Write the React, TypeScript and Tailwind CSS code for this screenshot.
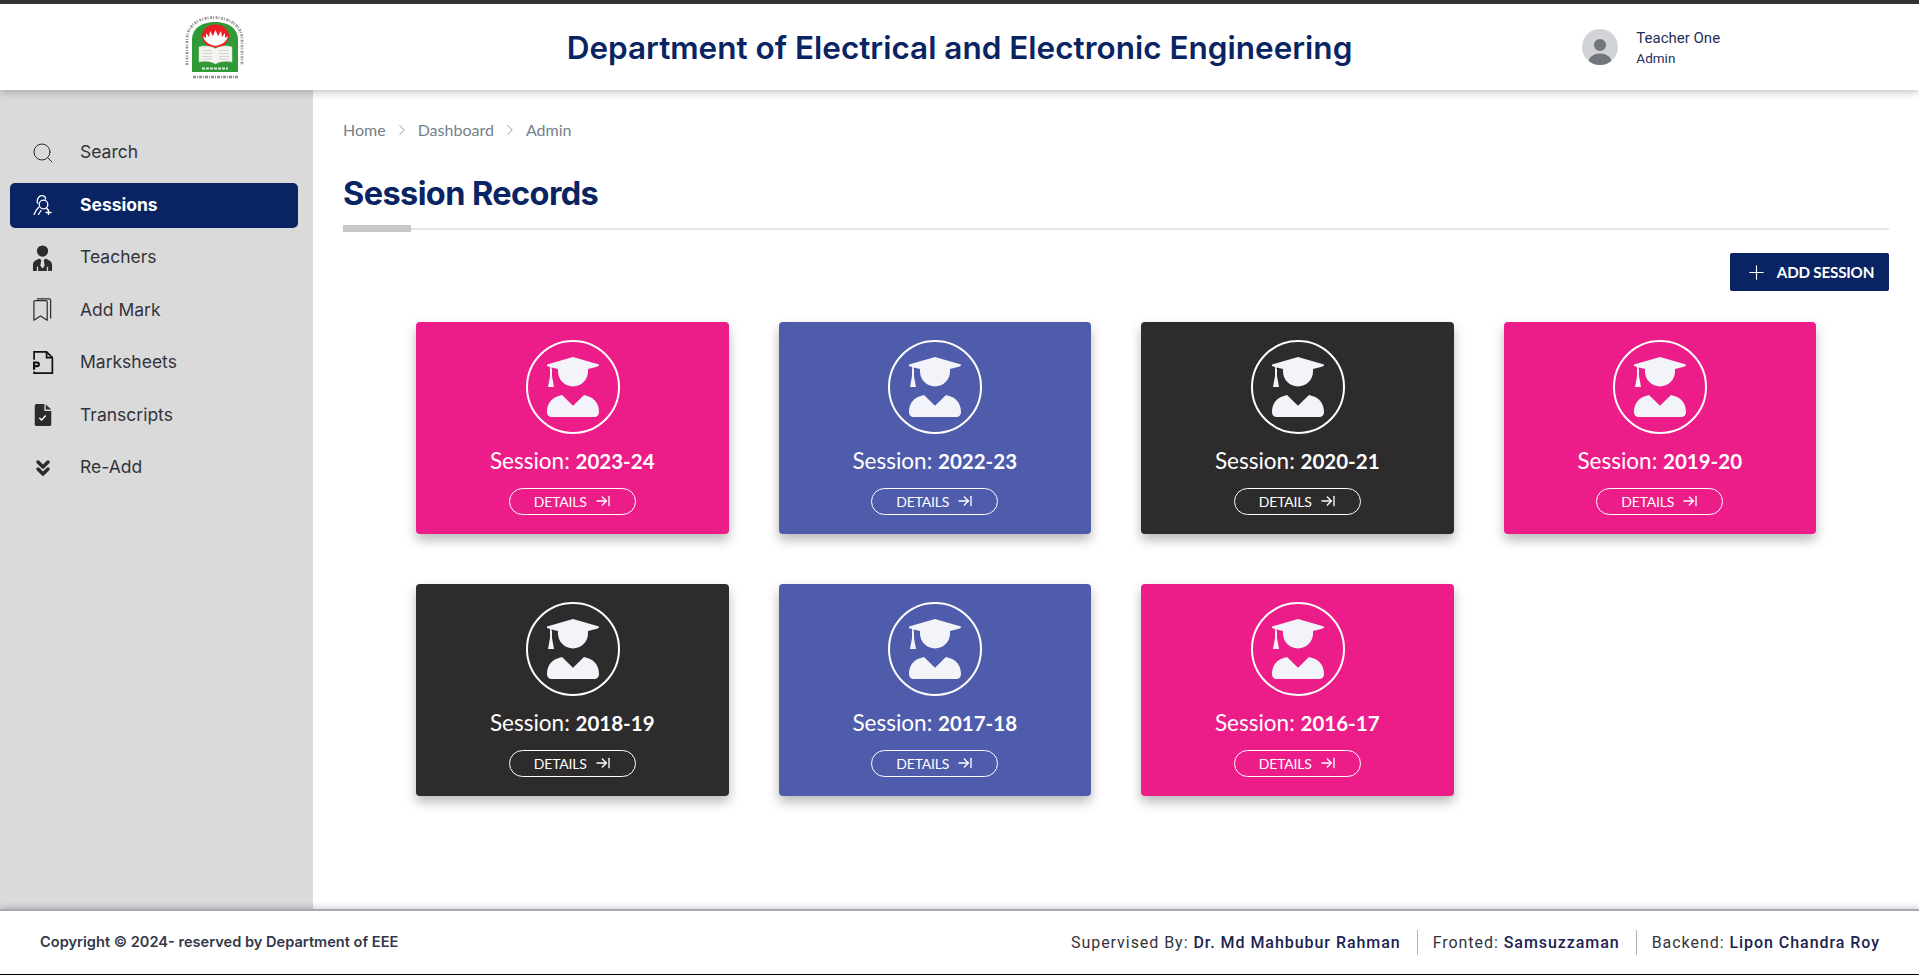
import { ArrowRightToLine, ChevronRight, ChevronsDown, Plus, Search } from "lucide-react";

const NAVY = "#0a2463";

const SESSIONS = [
  { year: "2023-24", bg: "bg-[#ec1c88]" },
  { year: "2022-23", bg: "bg-[#4f5bab]" },
  { year: "2020-21", bg: "bg-[#2d2b2c]" },
  { year: "2019-20", bg: "bg-[#ec1c88]" },
  { year: "2018-19", bg: "bg-[#2d2b2c]" },
  { year: "2017-18", bg: "bg-[#4f5bab]" },
  { year: "2016-17", bg: "bg-[#ec1c88]" },
];

function Logo() {
  return (
    <svg width="61" height="65" viewBox="0 0 61 65">
      {/* ring of tiny lettering, drawn as broken strokes */}
      <path d="M3 50V24C3 10 16 2.500 30 2.500S58 10 58 24V50" fill="none" stroke="#555" strokeWidth="2.800" strokeDasharray="2 1 1 1.500" opacity="0.6" />
      <path d="M8 57V25C8 13 18 7 31 7S54 13 54 25V57Z" fill="#2f9a36" />
      <ellipse cx="31.500" cy="21" rx="13.500" ry="11.500" fill="#ee1c25" />
      <path d="M19 21L22 23L22 18L25 22L26 16L29 21L31.500 15L34 21L37 16L38 22L41 18L41 23L44 21C43 27 37 30 31.500 31C26 30 20 27 19 21Z" fill="#fff" />
      <path d="M15 32C20 30 27 31 31.500 33.500C36 31 43 30 48 32V47C43 45.500 36 46 31.500 49C27 46 20 45.500 15 47Z" fill="#f4f4f0" stroke="#ddd" strokeWidth="0.500" />
      <path d="M18 35.500H28M18 38.500H28M18 41.500H28M18 44H28M35 35.500H45M35 38.500H45M35 41.500H45M35 44H45" stroke="#c4c4c4" strokeWidth="0.700" />
      <path d="M18 53.500H44" stroke="#d8efd8" strokeWidth="1.800" strokeDasharray="3 1" />
      <path d="M9 62H54" stroke="#444" strokeWidth="2.500" strokeDasharray="3 1 1 1" opacity="0.6" />
    </svg>
  );
}

function GraduateIcon() {
  return (
    <svg width="94" height="94" viewBox="0 0 94 94" className="ml-[1px] shrink-0">
      <circle cx="47" cy="47" r="46" fill="none" stroke="#fff" strokeWidth="2" />
      <path d="M21 24.500L47 17L73 24.500C73 26 72 26.500 70 27L62 29V31.500A15 15 0 0 1 32 31.500V29L25.500 27.500V29H24V27L21 26Z" fill="#f2f4f9" />
      <path d="M24 29H26V36L28 47H22L24 36Z" fill="#f2f4f9" />
      <path d="M21 72C21 62 27 57 36 55L47 65.700L58 55C67 57 73 62 73 72C73 75 71 77 68 77H26C23 77 21 75 21 72Z" fill="#f2f4f9" />
    </svg>
  );
}

function SessionsIcon() {
  return (
    <svg width="19" height="20" viewBox="0 0 19 20" fill="none" stroke="currentColor" strokeWidth="1.300" strokeLinecap="round">
      <circle cx="10.500" cy="9.500" r="4.300" />
      <path d="M13.500 13L15 15M4.500 8C3.500 4 6 0.700 9 0.700C11 0.700 12.500 2 12.500 4M5.500 12.500C3.500 14.500 2 17 1 19.500M8 15.500C7 17 6 18.500 5.500 19.500" />
      <path d="M15.500 15V20M13 17.500H18" />
    </svg>
  );
}

function TeacherIcon() {
  return (
    <svg width="21" height="26" viewBox="0 0 24 30" fill="#2d2b2c">
      <circle cx="12" cy="7" r="6.500" />
      <path d="M1 30V23C1 19 5 17 9 16L10.500 17.500L9.500 24L12 27L14.500 24L13.500 17.500L15 16C19 17 23 19 23 23V30H18.500V25H17V30H7V25H5.500V30Z" />
    </svg>
  );
}

function BookmarkIcon() {
  return (
    <svg width="19" height="24" viewBox="0 0 22 28" fill="none" stroke="#2d2b2c" strokeWidth="1.400" strokeLinejoin="round">
      <path d="M1 4.500C1 3.500 1.800 3 2.500 3H15C16 3 16.500 3.500 16.500 4.500V26L8.700 21L1 26Z" />
      <path d="M4.500 1H19C20 1 20.500 1.500 20.500 2.500V24" />
    </svg>
  );
}

function MarksheetIcon() {
  return (
    <svg width="22" height="25" viewBox="0 0 24 28" fill="none" stroke="#111" strokeWidth="1.900">
      <path d="M2 11V2H16L22.500 8.500V26H2V24" />
      <path d="M16 2V8.500H22.500" />
      <path d="M2 22V14H5.500C8 14 8 18 5.500 18H2" strokeWidth="2.400" />
    </svg>
  );
}

function TranscriptIcon() {
  return (
    <svg width="18" height="22" viewBox="0 0 18 24">
      <path d="M2 0H10.500V7.500H18V22C18 23 17 24 16 24H2C1 24 0 23 0 22V2C0 1 1 0 2 0Z" fill="#2d2b2c" />
      <path d="M12 0.500L18 6H12Z" fill="#2d2b2c" />
      <path d="M5 15L7.500 17.500L12 12.500" fill="none" stroke="#fff" strokeWidth="1.500" />
    </svg>
  );
}

const NAV = [
  { label: "Search", icon: <Search size={24} strokeWidth={1} color="#2d2b2c" /> },
  { label: "Sessions", icon: <SessionsIcon />, active: true },
  { label: "Teachers", icon: <TeacherIcon /> },
  { label: "Add Mark", icon: <BookmarkIcon /> },
  { label: "Marksheets", icon: <MarksheetIcon /> },
  { label: "Transcripts", icon: <TranscriptIcon /> },
  { label: "Re-Add", icon: <ChevronsDown size={24} strokeWidth={3.500} color="#2d2b2c" /> },
];

function Sidebar() {
  return (
    <aside className="w-[313px] shrink-0 bg-[#dadada] pt-[40px] pl-[10px] pr-[15px] font-['Inter',sans-serif]">
      <nav className="flex flex-col gap-[7.500px]">
        {NAV.map(({ label, icon, active }) => (
          <div
            key={label}
            className={
              active
                ? "flex h-[45px] items-center rounded-[5px] bg-[#0a2463] text-white font-bold"
                : "flex h-[45px] items-center rounded-[5px] text-[#33333b] font-normal"
            }
          >
            <div className="flex w-[70px] shrink-0 justify-center pr-[5px]">{icon}</div>
            <span className="text-[17.500px]">{label}</span>
          </div>
        ))}
      </nav>
    </aside>
  );
}

function Breadcrumb() {
  return (
    <div className="flex items-center text-[16px] text-[#75808a]">
      <span>Home</span>
      <ChevronRight size={18} strokeWidth={1} className="mx-[7px] text-[#777]" />
      <span>Dashboard</span>
      <ChevronRight size={18} strokeWidth={1} className="mx-[7px] text-[#777]" />
      <span>Admin</span>
    </div>
  );
}

function SessionCard({ year, bg }: { year: string; bg: string }) {
  return (
    <div className={`flex h-[212px] flex-col items-center rounded-[4px] pt-[18px] text-white shadow-[0_6px_12px_rgba(0,0,0,0.28)] ${bg}`}>
      <GraduateIcon />
      <div className="mt-[13px] text-[22.500px] leading-[28px]">
        Session: <span className="font-bold text-[20.500px]">{year}</span>
      </div>
      <button className="mt-[13px] flex h-[27px] w-[127px] items-center justify-center gap-[8px] rounded-full border border-white pb-[1px] text-[14px] tracking-[-0.2px]">
        DETAILS
        <ArrowRightToLine size={16} strokeWidth={2} />
      </button>
    </div>
  );
}

export default function App() {
  return (
    <div className="flex h-[975px] flex-col bg-white font-['Lato',sans-serif]">
      {/* top bar */}
      <header className="relative z-10 grid h-[90px] shrink-0 grid-cols-[1fr_auto_1fr] items-center border-t-[4px] border-[#333333] bg-white shadow-[0_2px_8px_rgba(0,0,0,0.25)]">
        <div className="pl-[184px]">
          <Logo />
        </div>
        <h1 className="mt-[1px] font-['Inter',sans-serif] text-[31.500px] font-semibold text-[#0a2463]">
          Department of Electrical and Electronic Engineering
        </h1>
        <div className="flex items-center justify-start gap-[18px] pl-[230px] font-['Roboto',sans-serif] text-[#0a2463]">
          <div className="flex h-[36px] w-[36px] items-end justify-center overflow-hidden rounded-full bg-[#d2d3d8]">
            <svg width="36" height="36" viewBox="0 0 36 36" fill="#72767c">
              <circle cx="18" cy="16" r="6" />
              <ellipse cx="18" cy="33" rx="11.500" ry="8.500" />
            </svg>
          </div>
          <div className="flex flex-col">
            <span className="text-[15px] leading-[20px] text-[#1f2d5a]">Teacher One</span>
            <span className="mt-[1px] text-[13.500px] leading-[18px] text-[#1f2d5a]">Admin</span>
          </div>
        </div>
      </header>

      <div className="flex min-h-0 flex-1">
        <Sidebar />
        <main className="flex-1 pl-[30px] pr-[30px] pt-[28px]">
          <Breadcrumb />
          <h2 className="mt-[32px] font-['Inter',sans-serif] text-[32.500px] font-bold leading-[40px] tracking-[-0.6px] text-[#0a2463]">
            Session Records
          </h2>
          <div className="relative mt-[14px] h-[2px] bg-[#e4e4e4]">
            <div className="absolute left-0 top-[-3px] h-[7px] w-[68px] bg-[#c8c8c8]" />
          </div>
          <div className="mt-[23px] flex justify-end">
            <button
              style={{ backgroundColor: NAVY }}
              className="flex h-[38px] w-[159px] items-center justify-center gap-[9px] rounded-[2px] text-[15.200px] font-bold tracking-[-0.2px] text-white"
            >
              <Plus size={23} strokeWidth={1.200} />
              ADD SESSION
            </button>
          </div>
          <div className="mt-[31px] grid grid-cols-[repeat(4,312.500px)] justify-center gap-x-[50px] gap-y-[50px]">
            {SESSIONS.map((s) => (
              <SessionCard key={s.year} year={s.year} bg={s.bg} />
            ))}
          </div>
        </main>
      </div>

      {/* footer */}
      <footer className="relative z-10 flex h-[66px] shrink-0 items-center justify-between border-t-2 border-b border-t-[#a9a9b3] border-b-black bg-white pl-[40px] pr-[39px] shadow-[0_-2px_6px_rgba(0,0,0,0.18)]">
        <span className="font-['Inter',sans-serif] text-[14.600px] font-semibold text-[#33384a]">Copyright © 2024- reserved by Department of EEE</span>
        <div className="flex items-center font-['Roboto',sans-serif] text-[16px] tracking-[0.95px] text-[#33333b]">
          <span className="pr-[16px]">
            Supervised By: <span className="font-medium text-[#1b2450]">Dr. Md Mahbubur Rahman</span>
          </span>
          <span className="border-l border-[#b5b5b5] pl-[15px] pr-[16px] leading-[25px]">
            Fronted: <span className="font-medium text-[#1b2450]">Samsuzzaman</span>
          </span>
          <span className="border-l border-[#b5b5b5] pl-[15px] leading-[25px]">
            Backend: <span className="font-medium text-[#1b2450]">Lipon Chandra Roy</span>
          </span>
        </div>
      </footer>
    </div>
  );
}
